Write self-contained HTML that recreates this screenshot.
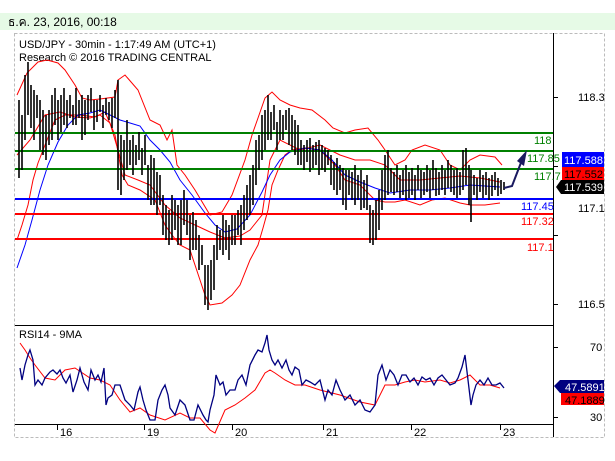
<!DOCTYPE html>
<html><head><meta charset="utf-8"><style>
body{margin:0;width:615px;height:461px;background:#fff;overflow:hidden;font-family:"Liberation Sans",sans-serif;}
svg{position:absolute;left:0;top:0}
</style></head><body>
<svg width="615" height="461" viewBox="0 0 615 461" font-family="Liberation Sans, sans-serif">
<rect x="0" y="13" width="615" height="17" fill="#e6fae6"/>
<text x="8" y="26" font-size="12" fill="#000">ธ.ค. 23, 2016, 00:18</text>
<rect x="14.5" y="33.5" width="590" height="404" fill="none" stroke="#bbb" stroke-dasharray="3,2"/>
<line x1="553.5" y1="33" x2="553.5" y2="437" stroke="#000"/>
<line x1="15" y1="325.5" x2="553" y2="325.5" stroke="#000"/>
<line x1="15" y1="424.5" x2="553" y2="424.5" stroke="#000"/>
<g stroke="#000"><line x1="57.5" y1="425" x2="57.5" y2="430"/><line x1="144.5" y1="425" x2="144.5" y2="430"/><line x1="232.5" y1="425" x2="232.5" y2="430"/><line x1="323.5" y1="425" x2="323.5" y2="430"/><line x1="411.5" y1="425" x2="411.5" y2="430"/><line x1="500.5" y1="425" x2="500.5" y2="430"/>
<line x1="553" y1="97.5" x2="558" y2="97.5"/><line x1="553" y1="166.5" x2="558" y2="166.5"/><line x1="553" y1="235.5" x2="558" y2="235.5"/><line x1="553" y1="304.5" x2="558" y2="304.5"/><line x1="553" y1="347.5" x2="558" y2="347.5"/><line x1="553" y1="417.5" x2="558" y2="417.5"/></g>
<g font-size="11" fill="#000"><text x="60" y="436">16</text><text x="147" y="436">19</text><text x="235" y="436">20</text><text x="326" y="436">21</text><text x="414" y="436">22</text><text x="503" y="436">23</text></g>
<g font-size="11" fill="#000"><text x="578" y="101">118.3</text><text x="578" y="212">117.1</text><text x="578" y="308">116.5</text><text x="590" y="351">70</text><text x="590" y="421">30</text></g>
<text x="19" y="48" font-size="11">USD/JPY - 30min - 1:17:49 AM (UTC+1)</text>
<text x="19" y="61" font-size="11">Research © 2016 TRADING CENTRAL</text>
<text x="19" y="338" font-size="11">RSI14 - 9MA</text>
<polyline fill="none" stroke="#f00" stroke-width="1" points="17,95 27,73 38,62 47,60 58,63 65,70 75,85 82,98 90,100 100,99 115,97 118,80 125,75 138,90 150,120 160,125 167,140 172,130 177,165 185,175 195,190 210,215 222,212 232,195 245,160 252,135 258,118 265,98 272,92 280,100 290,105 300,108 312,110 325,120 333,128 345,133 355,130 368,128 378,140 385,150 395,165 405,160 412,150 425,145 440,150 450,165 460,170 470,160 480,155 495,157 502,165"/>
<polyline fill="none" stroke="#f00" stroke-width="1" points="17,240 22,225 28,205 33,180 38,163 45,145 55,120 65,115 80,115 95,117 105,112 115,135 122,175 128,185 140,190 155,200 165,225 172,235 180,245 190,250 200,280 205,295 210,305 222,303 232,295 240,285 250,260 258,245 263,228 268,210 272,185 278,170 285,155 292,150 305,148 320,150 335,165 345,180 360,185 375,200 385,202 395,202 405,200 420,205 432,200 445,198 460,203 470,205 485,205 500,203"/>
<polyline fill="none" stroke="#f00" stroke-width="1" points="17,155 30,140 45,115 60,112 75,117 90,118 100,115 110,123 118,150 125,175 138,180 150,185 165,205 180,218 195,225 210,232 225,238 240,236 250,230 262,215 270,160 280,140 300,150 320,145 340,155 355,160 370,160 385,165 400,180 420,180 440,178 460,176 480,178 500,182"/>
<polyline fill="none" stroke="#00f" stroke-width="1" points="17,268 25,245 32,220 40,190 48,165 58,142 68,125 78,115 90,113 100,110 110,115 120,120 130,123 140,126 150,140 160,150 170,162 180,180 192,195 205,213 215,225 225,232 237,229 250,215 262,192 270,175 280,160 290,152 305,148 320,150 332,160 345,175 360,182 375,188 390,193 410,190 430,190 450,188 470,185 485,186 500,187"/>
<line x1="15" y1="133" x2="553" y2="133" stroke="#008000" stroke-width="2"/>
<line x1="15" y1="151" x2="553" y2="151" stroke="#008000" stroke-width="2"/>
<line x1="15" y1="169" x2="553" y2="169" stroke="#008000" stroke-width="2"/>
<line x1="15" y1="199" x2="553" y2="199" stroke="#0000ff" stroke-width="2"/>
<line x1="15" y1="214" x2="553" y2="214" stroke="#ff0000" stroke-width="2"/>
<line x1="15" y1="239" x2="553" y2="239" stroke="#ff0000" stroke-width="2"/>
<path fill="none" stroke="#000" stroke-width="1.6" d="M19,100V178M22,115V170M25,75V140M28,62V115M31,85V128M34,90V140M37,95V118M40,100V150M43,110V155M46,115V160M49,110V145M52,95V140M55,88V125M58,100V140M61,95V132M64,88V125M67,100V128M70,95V118M73,105V125M76,88V125M79,100V118M82,95V140M85,100V135M88,95V120M91,88V112M94,100V130M97,100V122M100,95V112M103,105V128M106,98V115M109,102V120M112,98V128M115,90V118M118,80V190M121,135V195M124,140V180M127,120V170M130,140V165M133,135V175M136,145V165M139,132V160M142,148V175M145,135V165M148,165V200M151,155V205M154,158V205M157,172V215M160,175V205M163,195V235M166,205V240M169,210V245M172,195V240M175,200V230M178,205V245M181,200V245M184,190V225M187,200V235M190,215V260M193,212V250M196,220V250M199,235V270M202,245V265M205,265V305M208,265V310M211,260V300M214,245V290M217,225V260M220,230V250M223,215V255M226,220V250M229,225V260M232,215V245M235,215V245M238,210V235M241,205V245M244,195V230M247,185V220M250,175V215M253,165V205M256,140V185M259,135V170M262,115V160M265,110V150M268,95V140M271,112V140M274,105V130M277,122V150M280,110V140M283,115V140M286,110V130M289,108V145M292,115V150M295,120V155M298,125V165M301,140V165M304,145V170M307,140V162M310,138V172M313,145V168M316,142V165M319,140V175M322,145V170M325,148V172M328,150V165M331,155V185M334,162V190M337,158V195M340,165V190M343,168V205M346,170V210M349,170V195M352,172V200M355,165V205M358,175V200M361,170V210M364,180V208M367,175V210M370,205V243M373,210V245M376,200V240M379,190V230M382,170V210M385,155V200M388,150V195M391,168V192M394,172V195M397,165V192M400,175V198M403,170V195M406,165V200M409,172V198M412,168V195M415,175V200M418,165V190M421,170V198M424,172V195M427,165V192M430,170V198M433,160V190M436,168V196M439,172V195M442,165V190M445,170V195M448,160V188M451,165V192M454,170V195M457,168V198M460,172V195M463,150V190M466,148V185M469,165V205M471,170V222M474,175V195M477,178V200M480,170V192M483,175V198M486,172V195M489,178V200M492,175V196M495,172V190M498,178V196M501,180V194M504,182V190"/>
<polyline fill="none" stroke="#1a1a60" stroke-width="2" points="504,188 512,186 522,160"/>
<polygon points="527,150 517,161 524,166" fill="#1a1a60"/>
<g font-size="11"><text x="534" y="144" fill="#008000">118</text><text x="527" y="162" fill="#008000">117.85</text><text x="534" y="180" fill="#008000">117.7</text><text x="521" y="210" fill="#0000ff">117.45</text><text x="521" y="225" fill="#ff0000">117.32</text><text x="527" y="251" fill="#ff0000">117.1</text></g>
<polyline fill="none" stroke="#f00" stroke-width="1" points="20,343 25,350 30,358 35,365 45,378 55,380 65,370 75,368 90,378 100,380 110,385 120,400 130,412 140,408 150,415 165,420 180,413 190,418 200,418 210,430 215,433 225,410 235,405 245,398 255,390 265,373 270,370 275,373 285,380 295,385 305,385 320,390 340,395 360,402 375,405 385,385 395,385 405,382 415,380 425,382 440,380 450,383 460,380 470,375 480,385 490,385 500,388"/>
<polyline fill="none" stroke="#000080" stroke-width="1.3" points="20,368 22,380 25,365 28,355 30,350 33,360 35,385 38,380 42,385 45,378 50,372 53,370 57,374 60,370 63,378 66,383 70,375 73,392 77,380 80,368 84,382 88,390 91,370 95,380 98,375 101,382 104,368 106,405 108,398 112,395 115,385 120,385 125,400 130,405 134,410 138,392 140,387 143,400 146,410 150,420 155,420 158,400 162,390 165,385 168,395 170,408 175,415 180,400 185,405 190,420 194,420 198,405 203,415 206,420 208,422 210,410 214,395 216,375 220,385 223,382 226,395 230,390 235,390 238,380 242,375 246,385 250,365 255,355 258,350 262,352 265,343 267,335 269,350 272,360 275,365 278,360 282,368 286,360 289,370 292,375 295,367 299,370 302,385 306,380 310,382 315,385 320,380 325,400 328,390 332,395 336,380 340,390 345,400 350,395 355,405 360,400 365,410 370,412 375,405 378,375 382,365 386,380 390,370 394,375 398,385 402,375 406,375 410,382 414,378 418,385 422,377 426,380 430,378 434,385 438,378 442,375 446,380 450,385 455,383 458,378 462,367 465,355 468,380 471,405 473,395 476,385 480,380 484,385 488,378 492,385 496,385 500,383 504,388"/>
<rect x="562" y="152" width="42" height="15" fill="#0000ff"/><text x="564" y="164" font-size="11" fill="#fff">117.588</text>
<rect x="562" y="167" width="42" height="13" fill="#ff0000"/><text x="564" y="178" font-size="11" fill="#000">117.552</text>
<polygon points="556,187 561,180 604,180 604,194 561,194" fill="#000"/><text x="564" y="191" font-size="11" fill="#fff">117.539</text>
<polygon points="554,386 560,380 604,380 604,393 560,393" fill="#000080"/><text x="565" y="391" font-size="11" fill="#fff">47.5891</text>
<rect x="561" y="393" width="43" height="12" fill="#ff0000"/><text x="565" y="404" font-size="11" fill="#000">47.1889</text>
</svg>
</body></html>
